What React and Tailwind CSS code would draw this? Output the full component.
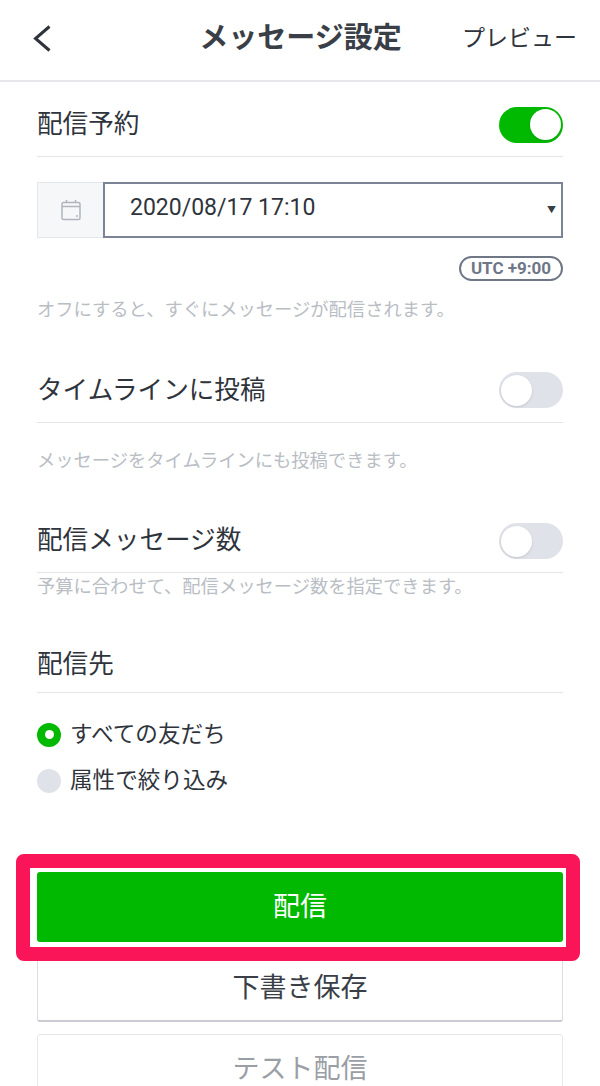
const jp = { fontFamily: '"Roboto", "Noto Sans CJK JP", sans-serif' }

function Toggle({ on }) {
  return (
    <div className={`flex h-[36px] w-[64px] items-center rounded-full p-[2px] ${on ? 'justify-end bg-[#00b900]' : 'justify-start bg-[#dfe2e8]'}`}>
      <div className="h-[31px] w-[31px] rounded-full bg-white shadow-sm" />
    </div>
  )
}

function SectionRow({ label, on, height }) {
  return (
    <div className={`flex items-center justify-between border-b border-[#e3e5e9] ${height}`}>
      <span className="text-[25.6px] leading-none text-[#2f343c]">{label}</span>
      {on !== undefined && <Toggle on={on} />}
    </div>
  )
}

function Note({ children, className }) {
  return <p className={`text-[18.3px] leading-none text-[#b9bdc4] ${className}`}>{children}</p>
}

function BackIcon() {
  return (
    <svg width="18" height="27" viewBox="0 0 18 27" fill="none" stroke="#2f343c" strokeWidth="3">
      <path d="M16.5 1.5 2.5 13.5l14 12" />
    </svg>
  )
}

function CalendarIcon() {
  return (
    <svg width="20" height="22" viewBox="0 0 20 22" fill="none" stroke="#b0b5bd" strokeWidth="1.5">
      <rect x="1" y="3.5" width="18" height="17" rx="1.5" />
      <path d="M1 7.5h18M5.5 1v2.5M14.5 1v2.5" />
      <path d="M15 17h2" strokeWidth="1.6" />
    </svg>
  )
}

export default function App() {
  return (
    <div className="relative h-[1086px] w-[600px] overflow-hidden bg-white" style={jp}>
      {/* Header */}
      <header className="flex h-[82px] items-center justify-between border-b-2 border-[#e6e7ea] pb-[3px] pl-[33px] pr-[23px]">
        <BackIcon />
        <h1 className="ml-[88px] text-[29px] font-bold leading-none text-[#3a3f47]">メッセージ設定</h1>
        <span className="text-[23px] leading-none text-[#2f343c]">プレビュー</span>
      </header>

      <main className="px-[37px]">
        <SectionRow label="配信予約" on={true} height="h-[75px] pt-[11px]" />

        <div className="mt-[25px] flex h-[56px] border border-[#e3e6eb]">
          <div className="flex w-[66px] items-center justify-center bg-[#f6f7f9]">
            <CalendarIcon />
          </div>
          <div className="-m-px flex flex-1 items-center justify-between border-2 border-[#7b8496] pl-[25px] pr-[5px]">
            <span className="mb-[5px] text-[23px] leading-none text-[#2f343c]">2020/08/17 17:10</span>
            <span className="text-[9px] leading-none text-[#3a3f47]">▼</span>
          </div>
        </div>

        <div className="mt-[18px] flex justify-end">
          <span className="flex h-[25px] w-[104px] items-center justify-center rounded-full border-2 border-[#6f7787] text-[17px] font-bold leading-none text-[#6f7787]">UTC +9:00</span>
        </div>

        <Note className="mt-[20px]">オフにすると、すぐにメッセージが配信されます。</Note>

        <SectionRow label="タイムラインに投稿" on={false} height="mt-[42px] h-[62px] pb-[3px]" />
        <Note className="mt-[29px]">メッセージをタイムラインにも投稿できます。</Note>

        <SectionRow label="配信メッセージ数" on={false} height="mt-[41px] h-[61px] pb-[1px]" />
        <Note className="mt-[5px]">予算に合わせて、配信メッセージ数を指定できます。</Note>

        <SectionRow label="配信先" height="mt-[31px] h-[66px] pt-[10px]" />

        <div className="mt-[24px] flex h-[36px] items-center gap-[9px]">
          <div className="flex h-[24px] w-[24px] items-center justify-center rounded-full bg-[#00b900]">
            <div className="h-[9px] w-[9px] rounded-full bg-white" />
          </div>
          <span className="text-[22.6px] leading-none text-[#2f343c]">すべての友だち</span>
        </div>
        <div className="mt-[10px] flex h-[36px] items-center gap-[9px]">
          <div className="h-[24px] w-[24px] rounded-full bg-[#dfe2e8]" />
          <span className="text-[22.6px] leading-none text-[#2f343c]">属性で絞り込み</span>
        </div>

        <button className="mt-[73px] flex h-[70px] w-full items-center justify-center rounded-[3px] bg-[#00b900] text-[27px] text-white">配信</button>
        <button className="mt-[8px] flex h-[72px] w-full items-center justify-center rounded-[3px] border border-b-2 border-[#dcdee2] border-b-[#c9cbd0] pt-[6px] text-[27px] leading-none text-[#3a3f47]">下書き保存</button>
        <button className="mt-[12px] flex h-[72px] w-full items-center justify-center rounded-[3px] border border-[#e6e8eb] text-[27px] leading-none text-[#9a9ea5]">テスト配信</button>
      </main>

      {/* Annotation frame drawn over the send button */}
      <div className="pointer-events-none absolute left-[16px] top-[854px] h-[107px] w-[564px] rounded-[8px] border-[14px] border-[#fa1458]" />
    </div>
  )
}
